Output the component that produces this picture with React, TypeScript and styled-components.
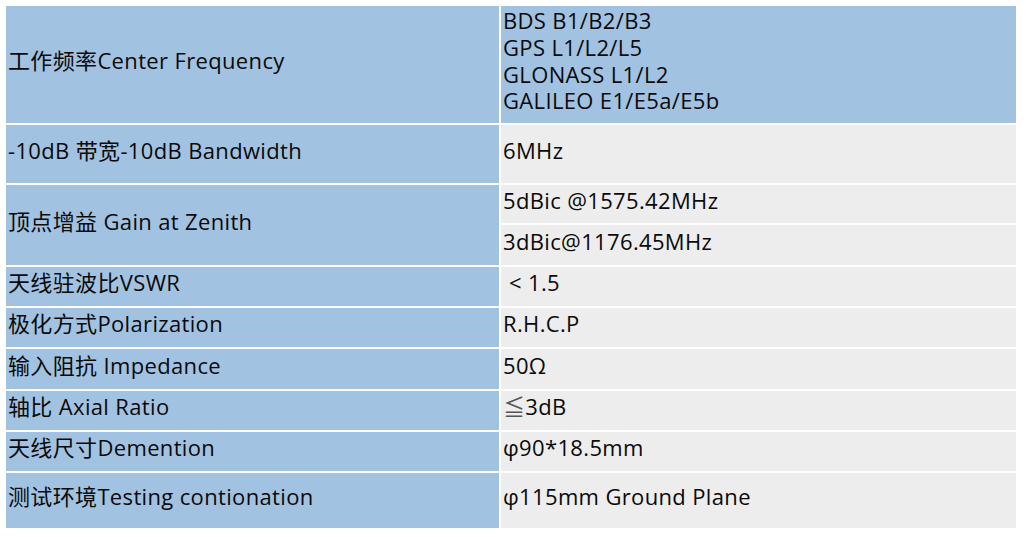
import React from "react";
import styled, { createGlobalStyle } from "styled-components";

const Global = createGlobalStyle`
  *, *::before, *::after { box-sizing: border-box; }
  html, body { margin: 0; padding: 0; background: #ffffff; }
  body { font-family: "Open Sans", "Noto Sans CJK SC", sans-serif; }
`;

const Page = styled.div`
  padding: 6px 10px 9px 6px;
  background: #ffffff;
`;

const Table = styled.div`
  display: flex;
  flex-direction: column;
  gap: 2px;
  background: #ffffff;
`;

const Row = styled.div<{ $h: number }>`
  display: grid;
  grid-template-columns: 493px 1fr;
  column-gap: 2px;
  height: ${(p) => p.$h}px;
`;

const Cell = styled.div<{ $tone: "blue" | "grey" }>`
  display: flex;
  flex-direction: column;
  justify-content: center;
  padding: 0 2px 8px 2px;
  background: ${(p) => (p.$tone === "blue" ? "#a2c2e2" : "#ededed")};
  color: #0a0a0a;
  font-family: "Open Sans", "Noto Sans CJK SC", sans-serif;
  font-size: 22px;
  letter-spacing: 0.35px;
  line-height: 26.7px;
  white-space: pre;
  overflow: hidden;
`;

const SplitCell = styled.div`
  display: flex;
  flex-direction: column;
  gap: 2px;
`;

const SubCell = styled(Cell)<{ $sh: number }>`
  height: ${(p) => p.$sh}px;
  flex: none;
`;

const Line = styled.span`
  display: block;
`;

const Mark = styled.span`
  color: #555555;
`;

type Spec = { label: string; value: React.ReactNode; h: number; valueTone?: "blue" | "grey" };

const rows: Spec[] = [
  {
    label: "工作频率Center Frequency",
    h: 117,
    valueTone: "blue",
    value: (
      <>
        <Line>BDS B1/B2/B3</Line>
        <Line>GPS L1/L2/L5</Line>
        <Line>GLONASS L1/L2</Line>
        <Line>GALILEO E1/E5a/E5b</Line>
      </>
    ),
  },
  { label: "-10dB 带宽-10dB Bandwidth", h: 58, value: "6MHz" },
  { label: "顶点增益 Gain at Zenith", h: 80, value: null },
  { label: "天线驻波比VSWR", h: 39, value: " < 1.5" },
  { label: "极化方式Polarization", h: 39, value: "R.H.C.P" },
  { label: "输入阻抗 Impedance", h: 40, value: "50Ω" },
  {
    label: "轴比 Axial Ratio",
    h: 39,
    value: (
      <span>
        <Mark>≦</Mark>3dB
      </span>
    ),
  },
  { label: "天线尺寸Demention", h: 39, value: "φ90*18.5mm" },
  { label: "测试环境Testing contionation", h: 55, value: "φ115mm Ground Plane" },
];

export default function App() {
  return (
    <Page>
      <Global />
      <Table>
        {rows.map((r) => (
          <Row key={r.label} $h={r.h}>
            <Cell $tone="blue">{r.label}</Cell>
            {r.value === null ? (
              <SplitCell>
                <SubCell $tone="grey" $sh={38}>5dBic @1575.42MHz</SubCell>
                <SubCell $tone="grey" $sh={40}>3dBic@1176.45MHz</SubCell>
              </SplitCell>
            ) : (
              <Cell $tone={r.valueTone ?? "grey"}>{r.value}</Cell>
            )}
          </Row>
        ))}
      </Table>
    </Page>
  );
}
